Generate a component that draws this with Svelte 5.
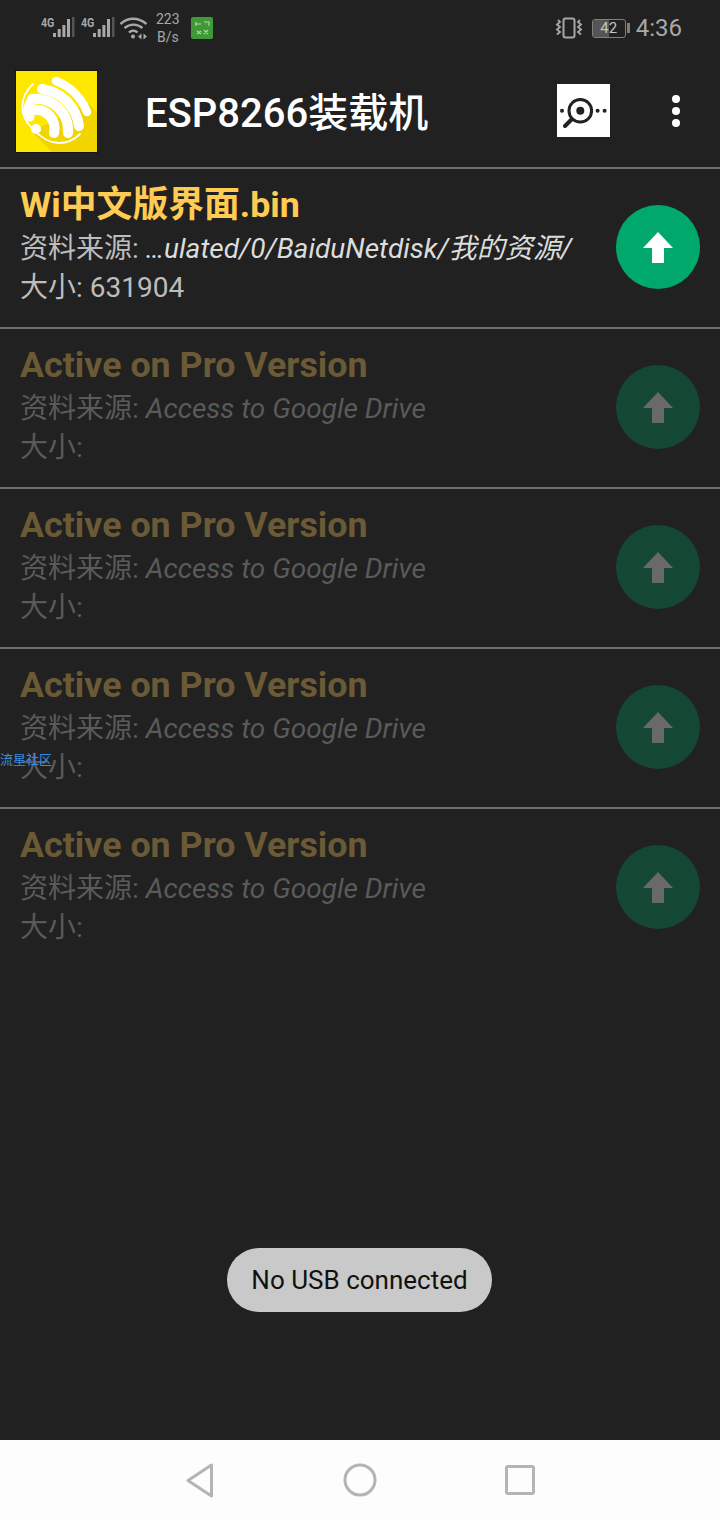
<script lang="ts">
  const rows = [
    { title: 'Wi中文版界面.bin', path: '…ulated/0/BaiduNetdisk/我的资源/', size: '631904', on: true },
    ...Array.from({ length: 4 }, () => ({ title: 'Active on Pro Version', path: 'Access to Google Drive', size: '', on: false })),
  ]
</script>

<div class="screen">
  <div class="status">
    <div class="group left">
      {#each [0, 1] as n (n)}
        <div class="signal">
          <span class="net">4G</span>
          <svg width="22" height="22" viewBox="0 0 22 22">
            <rect x="0" y="16" width="3" height="4" fill="#a8a8a8" />
            <rect x="4.700" y="12" width="3" height="8" fill="#a8a8a8" />
            <rect x="9.400" y="8" width="3" height="12" fill="#a8a8a8" />
            <rect x="14" y="2" width="3" height="18" fill="#a8a8a8" />
            <rect x="19" y="0" width="2.500" height="20" fill="#555" />
          </svg>
        </div>
      {/each}
      <svg class="wifi" width="28" height="24" viewBox="0 0 28 24" fill="none" stroke="#a8a8a8" stroke-width="2.400">
        <path d="M0.500 8C8 1 18 1 26.500 8" />
        <path d="M4.500 12C10 7.500 17 7.500 22.500 12" />
        <path d="M9 16.500C11.500 14 15 14 17.500 16.500" />
        <circle cx="13" cy="20.500" r="2" fill="#a8a8a8" stroke="none" />
        <path d="M18 20.500l3.500-3v6zM27 20.500l-3.500-3v6z" fill="#a8a8a8" stroke="none" />
      </svg>
      <div class="speed"><span>223</span><span>B/s</span></div>
      <svg class="app" width="22" height="22" viewBox="0 0 22 22">
        <rect width="22" height="22" rx="2" fill="#3f9a35" />
        <path d="M4 7h6M5 5v4M13 5h5v4M6 17l4-3M6 14l4 3M13 17l4-4M13 13l4 4" stroke="#b5d8ae" stroke-width="1.100" fill="none" />
      </svg>
    </div>
    <div class="group right">
      <svg width="28" height="22" viewBox="0 0 28 22" fill="none" stroke="#a8a8a8" stroke-width="2">
        <rect x="8.500" y="1.500" width="11" height="19" rx="2" />
        <path d="M3 3l2 2-3 2.500 3 2.500-3 2.500 3 2.500-3 2.500M25 3l-2 2 3 2.500-3 2.500 3 2.500-3 2.500 3 2.500" stroke-width="1.800" />
      </svg>
      <div class="battery">
        <div class="cell"><div class="fill" style="width: 50%"></div><span>42</span></div>
        <div class="nub"></div>
      </div>
      <span class="clock">4:36</span>
    </div>
  </div>

  <div class="toolbar">
    <svg class="logo" width="81" height="81" viewBox="0 0 81 81">
      <rect width="81" height="81" fill="#ffe800" />
      <path d="M72 32L81 41V81H36L16 61z" fill="#f2d500" />
      <g fill="none" stroke="#fff" stroke-linecap="round">
        <path d="M17 13C4 25 2 44 16 57c8 9 17 15 27 15 8 0 15-3 21-9" stroke-width="1.800" />
        <path d="M40 10A53 53 0 0 1 71 41" stroke-width="8.500" />
        <path d="M26 18A43 43 0 0 1 63 55" stroke-width="10" />
        <path d="M16 28A32 32 0 0 1 52 62" stroke-width="10" />
        <path d="M16 39A19 19 0 0 1 38 62" stroke-width="10" />
        <path d="M15 30Q9 38 14 46" stroke-width="9" />
      </g>
      <circle cx="20" cy="58" r="5" fill="#fff" />
    </svg>
    <h1>ESP8266装载机</h1>
    <div class="scan">
      <svg width="53" height="53" viewBox="0 0 53 53">
        <rect width="53" height="53" fill="#fff" />
        <circle cx="23.300" cy="26.700" r="11.300" fill="none" stroke="#222" stroke-width="3" />
        <circle cx="23.300" cy="26.700" r="4" fill="#222" />
        <path d="M14.500 35.500L8 42" stroke="#222" stroke-width="4" stroke-linecap="round" />
        <circle cx="5" cy="26.700" r="2" fill="#222" />
        <circle cx="40.600" cy="26.700" r="2" fill="#222" />
        <circle cx="47.600" cy="26.700" r="2" fill="#222" />
      </svg>
    </div>
    <div class="more"><i></i><i></i><i></i></div>
  </div>

  <div class="list">
    {#each rows as row}
      <div class="row" class:off={!row.on}>
        <div class="info">
          <div class="title">{row.title}</div>
          <div class="line">资料来源: <em>{row.path}</em></div>
          <div class="line">大小: {row.size}</div>
        </div>
        <div class="fab">
          <svg width="32" height="32" viewBox="0 0 32 32">
            <path d="M16 1L31 17H22V32H10V17H1z" fill="currentColor" />
          </svg>
        </div>
      </div>
    {/each}
  </div>

  <div class="spacer"></div>

  <div class="nav">
    <svg width="28" height="35" viewBox="0 0 28 35" fill="none" stroke="#b4b4b4" stroke-width="3" stroke-linejoin="round">
      <path d="M25.500 2V33L2 17.500z" />
    </svg>
    <svg width="34" height="34" viewBox="0 0 34 34" fill="none" stroke="#b4b4b4" stroke-width="3">
      <circle cx="17" cy="17" r="15" />
    </svg>
    <svg width="30" height="30" viewBox="0 0 30 30" fill="none" stroke="#b4b4b4" stroke-width="3">
      <rect x="1.500" y="1.500" width="27" height="27" rx="1.500" />
    </svg>
  </div>

  <span class="watermark">流星社区</span>
  <div class="toast">No USB connected</div>
</div>

<style>
  :global(body) {
    background: #212121;
  }
  .screen {
    position: relative;
    width: 720px;
    height: 1520px;
    display: flex;
    flex-direction: column;
    background: #212121;
    overflow: hidden;
    font-family: Roboto, 'Noto Sans CJK SC', sans-serif;
    color: #fff;
  }
  .status {
    height: 56px;
    display: flex;
    justify-content: space-between;
    align-items: center;
    padding: 0 38px 0 41px;
    color: #a8a8a8;
  }
  .group {
    display: flex;
    align-items: center;
  }
  .signal {
    display: flex;
    align-items: flex-start;
    width: 40px;
    height: 22px;
  }
  .net {
    width: 12px;
    flex: none;
    font-size: 13px;
    font-weight: 700;
    line-height: 11px;
    transform: scaleX(0.82);
    transform-origin: left;
  }
  .wifi {
    margin-left: -1px;
  }
  .speed {
    display: flex;
    flex-direction: column;
    align-items: center;
    font-size: 14px;
    line-height: 18px;
    margin-left: 8px;
  }
  .app {
    margin-left: 11px;
  }
  .battery {
    display: flex;
    align-items: center;
    gap: 1px;
    margin: 0 6px 0 9px;
  }
  .cell {
    position: relative;
    width: 34px;
    height: 19px;
    box-sizing: border-box;
    border: 1.500px solid #808080;
    border-radius: 3px;
    overflow: hidden;
    text-align: center;
  }
  .fill {
    position: absolute;
    inset: 0 auto 0 0;
    background: #555;
  }
  .cell span {
    position: relative;
    display: block;
    font-size: 15px;
    line-height: 16px;
    color: #c4c4c4;
  }
  .nub {
    width: 3px;
    height: 10px;
    background: #808080;
  }
  .clock {
    font-size: 24px;
    line-height: 28px;
  }
  .toolbar {
    height: 111px;
    display: flex;
    align-items: center;
    padding-left: 16px;
  }
  .logo {
    flex: none;
    margin-top: -1px;
    outline: 1px solid #141414;
  }
  h1 {
    margin: 5px 0 0 48px;
    flex: 1;
    font-size: 40px;
    font-weight: 500;
    line-height: 48px;
    color: #fff;
  }
  .scan {
    width: 53px;
    height: 53px;
    margin-top: -2px;
  }
  .scan svg {
    display: block;
  }
  .more {
    width: 8px;
    height: 32px;
    margin: -1px 40px 0 62px;
    display: flex;
    flex-direction: column;
    justify-content: space-between;
  }
  .more i {
    width: 8px;
    height: 8px;
    border-radius: 50%;
    background: #fff;
  }
  .list {
    display: flex;
    flex-direction: column;
  }
  .row {
    height: 160px;
    box-sizing: border-box;
    border-top: 2px solid #6e6e6e;
    display: flex;
    justify-content: space-between;
    padding: 12px 20px 0 20px;
  }
  .info {
    display: flex;
    flex-direction: column;
    min-width: 0;
  }
  .title {
    font-size: 35.800px;
    font-weight: 700;
    line-height: 48px;
    color: #ffcb52;
  }
  .line {
    font-size: 28px;
    line-height: 39px;
    color: #bdbdbd;
    white-space: nowrap;
  }
  .line em {
    color: #dcdcdc;
  }
  .off .title {
    color: #6b5a36;
  }
  .off .line,
  .off .line em {
    color: #5a5a5a;
  }
  .fab {
    width: 84px;
    height: 84px;
    margin-top: 24px;
    border-radius: 50%;
    background: #00a86b;
    color: #fff;
    display: flex;
    align-items: center;
    justify-content: center;
    flex: none;
  }
  .off .fab {
    background: #154735;
    color: #696969;
  }
  .spacer {
    flex: 1;
  }
  .nav {
    height: 80px;
    background: #fdfdfd;
    display: grid;
    grid-template-columns: repeat(3, 160px);
    justify-content: center;
    justify-items: center;
    align-items: center;
  }
  .watermark {
    position: absolute;
    left: 0;
    top: 752px;
    font-size: 13px;
    line-height: 16px;
    color: #3a8ee0;
  }
  .toast {
    position: absolute;
    left: 227px;
    top: 1248px;
    width: 265px;
    height: 64px;
    border-radius: 32px;
    background: #c9c9c9;
    color: #111;
    font-size: 26px;
    display: flex;
    align-items: center;
    justify-content: center;
  }
</style>
